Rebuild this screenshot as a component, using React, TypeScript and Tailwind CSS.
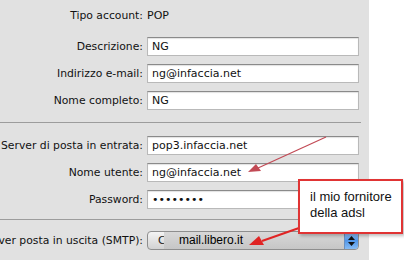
import React from "react";

const font = { fontFamily: '"DejaVu Sans", "Lucida Grande", sans-serif' };

function Label({ children }: { children: React.ReactNode }) {
  return (
    <div className="w-[143px] shrink-0 flex justify-end overflow-hidden whitespace-nowrap text-[10.8px] text-[#111] leading-[15px]">
      <span>{children}</span>
    </div>
  );
}

function Field({ label, value }: { label: string; value?: string }) {
  return (
    <div className="flex items-center gap-[4px] h-[19px]">
      <Label>{label}</Label>
      <div className="w-[212px] h-[19px] bg-white border border-[#b9b9b9] border-t-[#8a8a8a] shadow-[inset_0_1px_1px_rgba(0,0,0,0.12)] px-[4px] flex items-center text-[11px] text-[#111] leading-[15px] whitespace-nowrap overflow-hidden">
        {value}
      </div>
    </div>
  );
}

export default function App() {
  return (
    <div className="relative w-[404px] h-[260px] overflow-hidden bg-white flex" style={font}>
      <div className="w-[369px] h-full bg-[#e1e1e1] flex flex-col">
        <div className="flex items-center gap-[4px] h-[18px] mt-[6px]">
          <Label>Tipo account:</Label>
          <span className="text-[11px] text-[#111] leading-[15px]">POP</span>
        </div>

        <div className="flex flex-col gap-[8px] mt-[13px]">
          <Field label="Descrizione:" value="NG" />
          <Field label="Indirizzo e-mail:" value="ng@infaccia.net" />
          <Field label="Nome completo:" value="NG" />
        </div>

        <div className="mt-[12px] w-[361px] h-px bg-[#9c9c9c]" />

        <div className="flex flex-col gap-[8px] mt-[13px]">
          <Field label="Server di posta in entrata:" value="pop3.infaccia.net" />
          <Field label="Nome utente:" value="ng@infaccia.net" />
          <Field label="Password:" value="••••••••" />
        </div>

        <div className="mt-[10px] w-[361px] h-px bg-[#9c9c9c]" />

        <div className="flex items-center gap-[4px] h-[19px] mt-[11px]">
          <Label>Server posta in uscita (SMTP):</Label>
          <div className="w-[212px] h-[19px] rounded-[4px] border border-[#8e8e8e] bg-gradient-to-b from-[#f4f4f4] to-[#d2d2d2] flex items-center overflow-hidden">
            <span className="pl-[10px] w-[16px] shrink-0 text-[11px] text-[#222] leading-[15px] overflow-hidden">C</span>
            <div className="flex-1 h-full bg-gradient-to-b from-[#d8d8d8] to-[#c6c6c6] flex items-center pl-[15px]">
              <span className="text-[12px] text-black leading-[15px]" style={{ fontFamily: '"Liberation Sans", Arial, sans-serif' }}>
                mail.libero.it
              </span>
            </div>
            <div className="w-[14px] h-[19px] -my-px rounded-r-[4px] bg-gradient-to-b from-[#a9cdf7] via-[#4f95e8] to-[#8dc0f5] border-l border-[#6a8fbf] flex flex-col items-center justify-center gap-[2px]">
              <svg width="7" height="4" viewBox="0 0 7 4"><path d="M0 4 L3.5 0 L7 4 Z" fill="#111" /></svg>
              <svg width="7" height="4" viewBox="0 0 7 4"><path d="M0 0 L3.5 4 L7 0 Z" fill="#111" /></svg>
            </div>
          </div>
        </div>
      </div>

      <svg className="absolute inset-0 pointer-events-none" width="404" height="260" viewBox="0 0 404 260">
        <line x1="326" y1="137" x2="258" y2="168" stroke="#c24a55" strokeWidth="1.2" />
        <path d="M248 172 L256 164 L261 171 Z" fill="#c24a55" />
        <line x1="299" y1="228" x2="262" y2="241" stroke="#e02424" strokeWidth="2" />
        <path d="M249 245 L259 236 L264 245 Z" fill="#e02424" />
      </svg>

      <div className="absolute left-[298px] top-[179px] w-[105px] h-[55px] bg-white border-2 border-[#e03434] shadow-[2px_2px_3px_rgba(0,0,0,0.25)] pl-[10px] pt-[8px]">
        <div className="text-[13px] leading-[16px] text-[#111]" style={{ fontFamily: '"Liberation Sans", Arial, sans-serif' }}>
          il mio fornitore
          <br />
          della adsl
        </div>
      </div>
    </div>
  );
}
